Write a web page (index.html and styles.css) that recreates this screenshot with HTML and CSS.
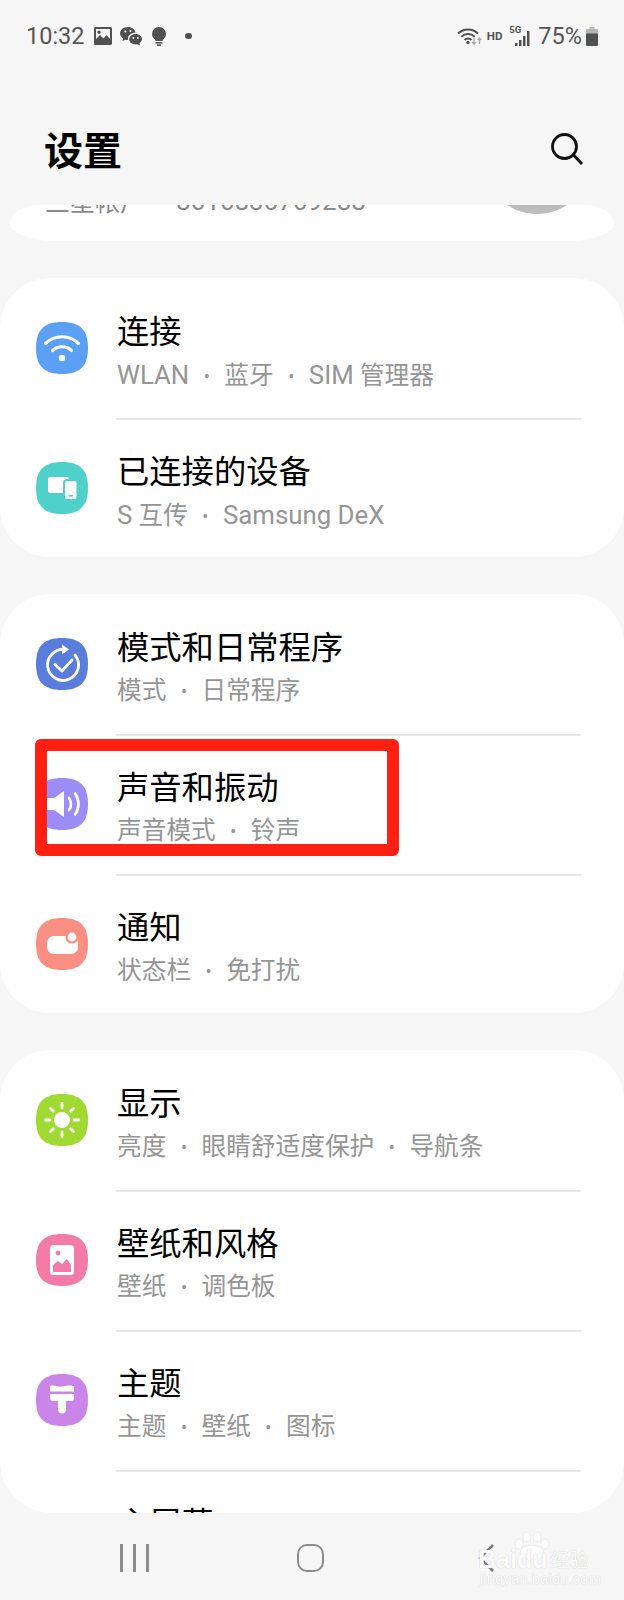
FILE: index.html
```html
<!DOCTYPE html>
<html lang="zh-CN">
<head>
<meta charset="utf-8">
<title>设置</title>
<link rel="stylesheet" href="styles.css">
</head>
<body>
<div class="screen">
  <div class="status">
    <div class="status-left">
      <span class="clock">10:32</span>
      <svg class="st-img" viewBox="0 0 18 18"><path class="ink" fill-rule="evenodd" d="M1.5 0h15A1.5 1.5 0 0 1 18 1.5v15a1.500 1.500 0 0 1-1.500 1.500h-15A1.500 1.500 0 0 1 0 16.500v-15A1.500 1.500 0 0 1 1.500 0ZM2 2v10l4-4 3.500 3.500L12.500 8 16 12V2ZM5 3.500a1.800 1.800 0 1 1 0 3.600 1.800 1.800 0 0 1 0-3.600Z"/></svg>
      <svg class="st-chat" viewBox="0 0 22 19"><path class="ink" d="M8 0c4 0 7.200 2.600 7.500 5.800C11.500 5.600 8 8.200 8 11.500c0 .6.100 1.100.3 1.600H8c-1 0-1.900-.2-2.700-.4L2.500 14l.6-2.600C1.200 10.100 0 8.300 0 6.300 0 2.800 3.600 0 8 0Z"/><path class="ink" d="M15.500 7C19 7 22 9.300 22 12.100c0 1.600-1 3-2.400 4l.5 2.400-2.500-1.300c-.7.200-1.400.3-2.100.3-3.500 0-6.300-2.300-6.300-5.200S12 7 15.500 7Z"/><circle class="hole" cx="5.300" cy="4.500" r="1"/><circle class="hole" cx="10.500" cy="4" r="1"/><circle class="hole" cx="13.300" cy="11" r=".9"/><circle class="hole" cx="17.800" cy="11" r=".9"/></svg>
      <svg class="st-bulb" viewBox="0 0 14 19"><path class="ink" d="M7 0a7 7 0 0 1 7 7c0 2.600-1.400 4.300-2.800 5.500-.5.500-.7 1-.7 1.500h-7c0-.5-.2-1-.7-1.500C1.400 11.300 0 9.600 0 7a7 7 0 0 1 7-7Z"/><rect class="ink" x="3.500" y="15" width="7" height="1.600"/><rect class="ink" x="5" y="17.400" width="4" height="1.600"/></svg>
      <span class="st-dot"></span>
    </div>
    <div class="status-right">
      <svg class="st-wifi" viewBox="0 0 25 18"><path class="arc" d="M1 6.500C6.500 1 15.500 1 21 6.500M4.300 9.800c3.800-3.700 9.600-3.700 13.400 0M7.500 13c2-1.900 5-1.900 7 0"/><circle class="ink" cx="11" cy="15.500" r="1.700"/><path class="arrow" d="M17 11v6M15 15l2 2 2-2M22.500 17v-6M20.700 13l1.800-2 1.800 2"/></svg>
      <span class="st-hd">HD</span>
      <span class="st-net">
        <span class="st-5g">5G</span>
        <svg class="st-bars" viewBox="0 0 18 16"><rect class="ink" x="1" y="13" width="2.500" height="3"/><rect class="ink" x="5" y="10" width="2.500" height="6"/><rect class="ink" x="9" y="6" width="2.500" height="10"/><rect class="ink" x="13" y="1" width="2.500" height="15"/></svg>
      </span>
      <span class="st-pct">75%</span>
      <svg class="st-batt" viewBox="0 0 12 19"><path class="batt-top" d="M3.500 0h5v2H11a1 1 0 0 1 1 1v4H0V3a1 1 0 0 1 1-1h2.500Z"/><path class="ink" d="M0 6.500h12V18a1 1 0 0 1-1 1H1a1 1 0 0 1-1-1Z"/></svg>
    </div>
  </div>

  <header class="header">
    <h1 class="page-title">设置</h1>
    <svg class="search" viewBox="0 0 32 32"><circle cx="13.500" cy="13.500" r="12"/><path d="M22.500 22l8.500 9"/></svg>
  </header>

  <main class="list">
    <section class="card card-account">
      <div class="account">
        <span class="acc-name">三星帐户</span>
        <span class="acc-num">8616830709288</span>
        <span class="avatar"></span>
      </div>
    </section>

    <section class="card">
      <div class="row">
        <svg class="icon" viewBox="0 0 52 52"><path class="sq c-wifi" d="M26 0C44 0 52 8 52 26S44 52 26 52 0 44 0 26 8 0 26 0Z"/><path class="line" d="M9.500 21.500c9.500-9 23.500-9 33 0M16.500 28.500c5.500-5 13.500-5 19 0"/><circle class="fill" cx="26" cy="36" r="3.200"/></svg>
        <div class="text"><div class="title">连接</div><div class="sub"><span class="en">WLAN</span><span class="sep">•</span>蓝牙<span class="sep">•</span><span class="en">SIM</span> 管理器</div></div>
      </div>
      <div class="row last">
        <svg class="icon" viewBox="0 0 52 52"><path class="sq c-dev" d="M26 0C44 0 52 8 52 26S44 52 26 52 0 44 0 26 8 0 26 0Z"/><rect class="fill" x="12" y="15" width="21" height="16" rx="2"/><rect class="fill stroke-dev" x="28" y="18" width="13.500" height="20" rx="3"/><rect class="c-mark" x="32.500" y="33" width="4.500" height="1.600"/></svg>
        <div class="text"><div class="title">已连接的设备</div><div class="sub"><span class="en">S</span> 互传<span class="sep">•</span><span class="en">Samsung DeX</span></div></div>
      </div>
    </section>

    <section class="card">
      <div class="row">
        <svg class="icon" viewBox="0 0 52 52"><path class="sq c-rou" d="M26 0C44 0 52 8 52 26S44 52 26 52 0 44 0 26 8 0 26 0Z"/><path class="line thin" d="M29 11.500A15.500 15.500 0 1 0 39 17"/><path class="fill" d="M26 6.500l7 5-7 5Z"/><path class="line thin" d="M19 26.500l7 6.500 10-11"/></svg>
        <div class="text"><div class="title">模式和日常程序</div><div class="sub">模式<span class="sep">•</span>日常程序</div></div>
      </div>
      <div class="row">
        <svg class="icon" viewBox="0 0 52 52"><path class="sq c-snd" d="M26 0C44 0 52 8 52 26S44 52 26 52 0 44 0 26 8 0 26 0Z"/><path class="fill" d="M11 20h7l10-7v26l-10-7h-7Z"/><path class="line thin" d="M33 20c2.500 3.500 2.500 8.500 0 12M39 15.500c4.500 6 4.500 15 0 21"/></svg>
        <div class="text"><div class="title">声音和振动</div><div class="sub">声音模式<span class="sep">•</span>铃声</div></div>
      </div>
      <div class="row last">
        <svg class="icon" viewBox="0 0 52 52"><path class="sq c-not" d="M26 0C44 0 52 8 52 26S44 52 26 52 0 44 0 26 8 0 26 0Z"/><rect class="fill" x="11" y="18" width="31" height="18" rx="7"/><circle class="fill stroke-not" cx="36" cy="19" r="5.500"/></svg>
        <div class="text"><div class="title">通知</div><div class="sub">状态栏<span class="sep">•</span>免打扰</div></div>
      </div>
    </section>

    <section class="card">
      <div class="row">
        <svg class="icon" viewBox="0 0 52 52"><path class="sq c-dis" d="M26 0C44 0 52 8 52 26S44 52 26 52 0 44 0 26 8 0 26 0Z"/><circle class="fill" cx="26" cy="26" r="8"/><path class="line thin" d="M26 9.500v4.500M26 38v4.500M9.500 26H14M38 26h4.500M14.500 14.500l2.800 2.800M34.700 34.700l2.800 2.800M37.500 14.500l-2.800 2.800M17.300 34.700l-2.800 2.800"/></svg>
        <div class="text"><div class="title">显示</div><div class="sub">亮度<span class="sep">•</span>眼睛舒适度保护<span class="sep">•</span>导航条</div></div>
      </div>
      <div class="row">
        <svg class="icon" viewBox="0 0 52 52"><path class="sq c-wal" d="M26 0C44 0 52 8 52 26S44 52 26 52 0 44 0 26 8 0 26 0Z"/><rect class="fill" x="14" y="11" width="24" height="30" rx="3.500"/><circle class="c-wal" cx="22" cy="19" r="2.400"/><path class="c-wal" d="M17 38v-7l5-4 4 3 5-5 4 6v7Z"/></svg>
        <div class="text"><div class="title">壁纸和风格</div><div class="sub">壁纸<span class="sep">•</span>调色板</div></div>
      </div>
      <div class="row">
        <svg class="icon" viewBox="0 0 52 52"><path class="sq c-the" d="M26 0C44 0 52 8 52 26S44 52 26 52 0 44 0 26 8 0 26 0Z"/><path class="fill" d="M14 12c4-1.500 8 1.500 12 .5s8-1.500 12-.5v5.500H14Z"/><path class="fill" d="M14 20h24v4a3 3 0 0 1-3 3h-5v8.500a4 4 0 0 1-8 0V27h-5a3 3 0 0 1-3-3Z"/></svg>
        <div class="text"><div class="title">主题</div><div class="sub">主题<span class="sep">•</span>壁纸<span class="sep">•</span>图标</div></div>
      </div>
      <div class="row last">
        <svg class="icon" viewBox="0 0 52 52"><path class="sq c-home" d="M26 0C44 0 52 8 52 26S44 52 26 52 0 44 0 26 8 0 26 0Z"/></svg>
        <div class="text"><div class="title">主屏幕</div></div>
      </div>
    </section>
  </main>

  <nav class="nav">
    <span class="nav-item"><span class="nav-recent"><i></i><i></i><i></i></span></span>
    <span class="nav-item"><span class="nav-home"></span></span>
    <span class="nav-item"><svg class="nav-back" viewBox="0 0 16 28"><path d="M15 1L2 14l13 13"/></svg></span>
  </nav>

  <div class="highlight"></div>

  <div class="watermark">
    <svg class="wm-paw" viewBox="0 0 36 26"><ellipse cx="5" cy="12" rx="4" ry="5"/><ellipse cx="13" cy="5" rx="4" ry="5"/><ellipse cx="23" cy="5" rx="4" ry="5"/><ellipse cx="31" cy="12" rx="4" ry="5"/><ellipse cx="18" cy="21" rx="12" ry="8"/></svg>
    <div class="wm-line"><span class="wm-logo">Baidu</span><span class="wm-cn">经验</span></div>
    <div class="wm-url">jingyan.baidu.com</div>
  </div>
</div>
</body>
</html>
```

FILE: styles.css
```css
* { box-sizing: border-box; }
html, body { margin: 0; padding: 0; }
body {
  width: 624px;
  height: 1600px;
  overflow: hidden;
  background: #f6f6f6;
  font-family: Roboto, "Noto Sans CJK SC", sans-serif;
}
.screen {
  position: relative;
  width: 624px;
  height: 1600px;
  display: flex;
  flex-direction: column;
  background: #f6f6f6;
}

/* status bar */
.status {
  height: 72px;
  flex: none;
  display: flex;
  justify-content: space-between;
  align-items: center;
  padding: 0 26px 0 26px;
  color: #555;
}
.status-left, .status-right { display: flex; align-items: center; }
.ink { fill: #505050; }
.hole { fill: #f6f6f6; }
.clock { font-size: 23.500px; width: 68px; }
.st-img { width: 18px; height: 18px; }
.st-chat { width: 22px; height: 19px; margin-left: 8px; }
.st-bulb { width: 14px; height: 19px; margin-left: 10px; }
.st-dot { width: 6.500px; height: 6.500px; border-radius: 50%; background: #505050; margin-left: 19px; }
.st-wifi { width: 25px; height: 18px; margin-top: -1px; }
.arc { fill: none; stroke: #505050; stroke-width: 2; }
.arrow { fill: none; stroke: #a8a8a8; stroke-width: 1.300; }
.st-hd { font-size: 11.500px; font-weight: 700; margin-left: 5px; color: #505050; }
.st-net { position: relative; width: 24px; height: 20px; margin-left: 7px; }
.st-5g { position: absolute; left: 0; top: -2px; font-size: 9.500px; font-weight: 700; color: #505050; }
.st-bars { position: absolute; left: 5px; top: 4px; width: 18px; height: 16px; }
.st-pct { font-size: 23.500px; margin-left: 5px; }
.st-batt { width: 12px; height: 19px; margin-left: 4px; }
.batt-top { fill: #b5b5b5; }

/* header */
.header {
  height: 133px;
  flex: none;
  display: flex;
  justify-content: space-between;
  align-items: center;
  padding: 21px 41px 0 44px;
}
.page-title { margin: 5px 0 0; font-size: 39px; line-height: 48px; font-weight: 700; color: #000; }
.search { width: 32px; height: 32px; fill: none; stroke: #111; stroke-width: 2.800; }

/* scrolling list */
.list {
  flex: 1;
  min-height: 0;
  overflow: hidden;
  display: flex;
  flex-direction: column;
  gap: 37px;
  border-radius: 0 0 52px 52px;
}
.card {
  flex: none;
  background: #fefefe;
  border-radius: 50px;
  padding-top: 2px;
}
.card-account {
  height: 36px;
  margin: 0 10px;
  padding-top: 0;
  border-radius: 44px / 18px;
  border-top-left-radius: 30px 18px;
  border-top-right-radius: 30px 18px;
}
.account {
  display: flex;
  align-items: flex-end;
  height: 108px;
  margin-top: -99px;
  padding: 0 23px 0 35px;
  color: #8a8a8a;
}
.acc-name { font-size: 25px; line-height: 30px; width: 131px; margin-bottom: -1px; font-family: "Noto Sans CJK SC", sans-serif; }
.acc-num { font-size: 26px; line-height: 30px; margin-bottom: -2px; flex: 1; }
.avatar { width: 108px; height: 108px; border-radius: 50%; background: #bcbcbc; flex: none; }
.row {
  height: 140px;
  display: flex;
  align-items: flex-start;
  gap: 29px;
  padding-left: 36px;
  position: relative;
}
.row::after {
  content: "";
  position: absolute;
  left: 116px;
  right: 43px;
  bottom: 0;
  height: 2px;
  background: #e7e7e7;
}
.row.last { height: 137px; }
.row.last::after { display: none; }
.icon { width: 52px; height: 52px; margin-top: 42px; flex: none; }
.text { padding-top: 32px; font-family: Roboto, "Noto Sans CJK SC", sans-serif; }
.title { font-size: 32.300px; line-height: 40px; color: #000; }
.sub { font-size: 24.700px; line-height: 46px; color: #959595; white-space: nowrap; }
.en { font-size: 25.800px; }
.sep { font-size: 18px; margin: 0 14.500px; vertical-align: 1px; }

.c-wifi { fill: #5ba0f4; }
.c-dev { fill: #4fd0ca; }
.c-rou { fill: #5a7cdb; }
.c-snd { fill: #9c8df6; }
.c-not { fill: #f98e82; }
.c-dis { fill: #a0d932; }
.c-wal { fill: #f27ca6; }
.c-the { fill: #c985e8; }
.c-home { fill: #3fc8bf; }
.c-mark { fill: #4fd0ca; }
.fill { fill: #fff; }
.line { fill: none; stroke: #fff; stroke-width: 3.200; stroke-linecap: round; stroke-linejoin: round; }
.line.thin { stroke-width: 2.800; }
.stroke-dev { stroke: #4fd0ca; stroke-width: 2; }
.stroke-not { stroke: #f98e82; stroke-width: 2.200; }

/* nav */
.nav {
  height: 87px;
  flex: none;
  display: grid;
  grid-template-columns: repeat(3, 175.500px);
  padding: 3px 0 0 47px;
  align-items: center;
}
.nav-item { display: flex; justify-content: center; align-items: center; }
.nav-recent { display: flex; gap: 10px; }
.nav-recent i { display: block; width: 3px; height: 28px; background: #8c8c8c; }
.nav-home { width: 27px; height: 28px; border: 2.500px solid #8c8c8c; border-radius: 10px; }
.nav-back { width: 16px; height: 28px; fill: none; stroke: #777; stroke-width: 2.500; }

/* annotation drawn over the screenshot */
.highlight {
  position: absolute;
  left: 35px;
  top: 739px;
  width: 364px;
  height: 117px;
  border: 12px solid #ff2012;
  border-radius: 6px;
}

.watermark {
  position: absolute;
  left: 476px;
  top: 1532px;
  width: 116px;
  height: 54px;
  color: #fbfbfb;
  text-shadow: 0 0 1px #d6d6d6, 0 0 1px #d6d6d6;
}
.wm-paw { position: absolute; left: 38px; top: 0; width: 36px; height: 26px; fill: #fdfdfd; stroke: #e6e6e6; stroke-width: .8; }
.wm-line { position: absolute; left: 2px; top: 12px; display: flex; align-items: center; gap: 3px; white-space: nowrap; }
.wm-logo { font-family: "Liberation Sans", sans-serif; font-size: 25px; line-height: 30px; font-weight: 700; }
.wm-cn { font-family: "Noto Sans CJK SC", sans-serif; font-size: 19px; line-height: 30px; }
.wm-url { position: absolute; left: 4px; top: 40px; font-family: "Liberation Sans", sans-serif; font-size: 15px; line-height: 14px; white-space: nowrap; }
```
